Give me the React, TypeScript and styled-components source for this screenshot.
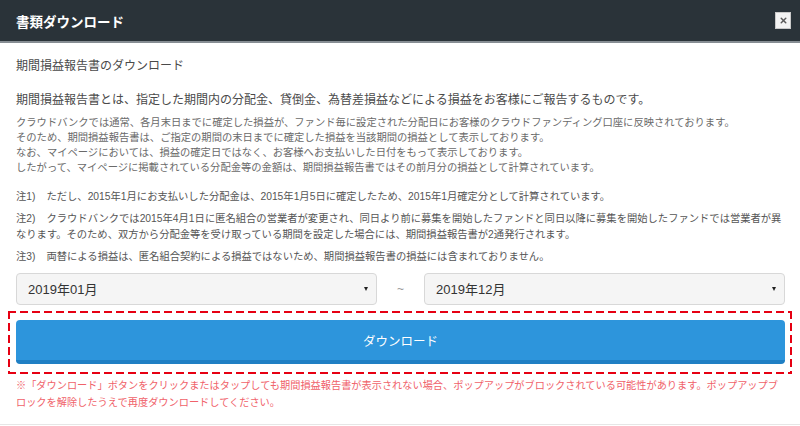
import React from 'react';
import styled, { createGlobalStyle } from 'styled-components';
import { X } from 'lucide-react';

const GlobalStyle = createGlobalStyle`
  html, body {
    margin: 0;
    padding: 0;
    background: #ffffff;
  }
  body {
    font-family: "Liberation Sans", "Noto Sans CJK JP", sans-serif;
  }
`;

const Modal = styled.div`
  width: 800px;
  background: #fff;
`;

const Header = styled.div`
  height: 41px;
  display: flex;
  align-items: center;
  justify-content: space-between;
  padding: 0 9px 0 16px;
  background: #2a3339;
  border-bottom: 2px solid #868d93;
`;

const Title = styled.h1`
  margin: 0;
  font-size: 13.5px;
  font-weight: 700;
  color: #ffffff;
`;

const CloseButton = styled.button`
  width: 16px;
  height: 17px;
  padding: 0;
  display: flex;
  align-items: center;
  justify-content: center;
  background: #f3f3f3;
  border: 1px solid #c9c9c9;
  color: #5a5a5a;
  cursor: pointer;
`;

const Body = styled.div`
  padding: 14px 15px 13px 16px;
  border-bottom: 1px solid #e6e6e6;
  display: flex;
  flex-direction: column;
`;

const Lead = styled.p<{ $gap?: number }>`
  margin: ${p => p.$gap ?? 0}px 0 0;
  font-size: 12px;
  line-height: 18px;
  color: #4a4a4a;
`;

const Paragraph = styled.p`
  margin: 6px 0 0;
  font-size: 10.3px;
  line-height: 15px;
  color: #6a6a6a;
`;

const Notes = styled.div`
  margin-top: 14px;
  display: flex;
  flex-direction: column;
  gap: 6px;
`;

const Note = styled.p`
  margin: 0;
  font-size: 10.3px;
  line-height: 16px;
  color: #555;
`;

const NoteLabel = styled.span`
  margin-right: 11px;
`;

const PeriodRow = styled.div`
  margin-top: 8px;
  display: grid;
  grid-template-columns: 1fr 47px 1fr;
  align-items: center;
`;

const SelectWrap = styled.div`
  position: relative;
  height: 32px;
`;

const Select = styled.select`
  width: 100%;
  height: 32px;
  appearance: none;
  -webkit-appearance: none;
  padding: 0 24px 0 11px;
  background: #f5f5f5;
  border: 1px solid #d8d8d8;
  border-radius: 4px;
  font-family: inherit;
  font-size: 13px;
  color: #333;
  outline: none;
`;

const Caret = styled.span`
  position: absolute;
  right: 9px;
  top: 14px;
  width: 0;
  height: 0;
  border-left: 2.5px solid transparent;
  border-right: 2.5px solid transparent;
  border-top: 4px solid #222;
  pointer-events: none;
`;

const Tilde = styled.span`
  text-align: center;
  font-size: 12px;
  color: #999;
`;

const dash = '#e60012 0 8px, transparent 8px 12px';

const Highlight = styled.div`
  margin: 6px -7px 0 -8px;
  padding: 9px 7px 10px 8px;
  background:
    repeating-linear-gradient(90deg, ${dash}) left top / 100% 2px no-repeat,
    repeating-linear-gradient(90deg, ${dash}) left bottom / 100% 2px no-repeat,
    repeating-linear-gradient(180deg, ${dash}) left top / 2px 100% no-repeat,
    repeating-linear-gradient(180deg, ${dash}) right top / 2px 100% no-repeat;
`;

const DownloadButton = styled.button`
  width: 100%;
  height: 44px;
  display: flex;
  align-items: center;
  justify-content: center;
  background: #2d95dc;
  border: none;
  border-bottom: 4px solid #1f7fc4;
  border-radius: 4px;
  font-family: inherit;
  font-size: 12.5px;
  color: #ffffff;
  cursor: pointer;
`;

const Caution = styled.p`
  margin: 3px 0 0;
  font-size: 10.2px;
  line-height: 17px;
  color: #f0626a;
  white-space: nowrap;
`;

const App: React.FC = () => {
  return (
    <>
      <GlobalStyle />
      <Modal>
        <Header>
          <Title>書類ダウンロード</Title>
          <CloseButton type="button" aria-label="close">
            <X size={9} strokeWidth={4} />
          </CloseButton>
        </Header>
        <Body>
          <Lead>期間損益報告書のダウンロード</Lead>
          <Lead $gap={16}>
            期間損益報告書とは、指定した期間内の分配金、貸倒金、為替差損益などによる損益をお客様にご報告するものです。
          </Lead>
          <Paragraph>
            クラウドバンクでは通常、各月末日までに確定した損益が、ファンド毎に設定された分配日にお客様のクラウドファンディング口座に反映されております。
            <br />
            そのため、期間損益報告書は、ご指定の期間の末日までに確定した損益を当該期間の損益として表示しております。
            <br />
            なお、マイページにおいては、損益の確定日ではなく、お客様へお支払いした日付をもって表示しております。
            <br />
            したがって、マイページに掲載されている分配金等の金額は、期間損益報告書ではその前月分の損益として計算されています。
          </Paragraph>
          <Notes>
            <Note>
              <NoteLabel>注1)</NoteLabel>
              ただし、2015年1月にお支払いした分配金は、2015年1月5日に確定したため、2015年1月確定分として計算されています。
            </Note>
            <Note>
              <NoteLabel>注2)</NoteLabel>
              クラウドバンクでは2015年4月1日に匿名組合の営業者が変更され、同日より前に募集を開始したファンドと同日以降に募集を開始したファンドでは営業者が異
              <br />
              なります。そのため、双方から分配金等を受け取っている期間を設定した場合には、期間損益報告書が2通発行されます。
            </Note>
            <Note>
              <NoteLabel>注3)</NoteLabel>
              両替による損益は、匿名組合契約による損益ではないため、期間損益報告書の損益には含まれておりません。
            </Note>
          </Notes>
          <PeriodRow>
            <SelectWrap>
              <Select defaultValue="2019-01">
                <option value="2019-01">2019年01月</option>
              </Select>
              <Caret />
            </SelectWrap>
            <Tilde>~</Tilde>
            <SelectWrap>
              <Select defaultValue="2019-12">
                <option value="2019-12">2019年12月</option>
              </Select>
              <Caret />
            </SelectWrap>
          </PeriodRow>
          <Highlight>
            <DownloadButton type="button">ダウンロード</DownloadButton>
          </Highlight>
          <Caution>
            ※「ダウンロード」ボタンをクリックまたはタップしても期間損益報告書が表示されない場合、ポップアップがブロックされている可能性があります。ポップアップブ
            <br />
            ロックを解除したうえで再度ダウンロードしてください。
          </Caution>
        </Body>
      </Modal>
    </>
  );
};

export default App;
